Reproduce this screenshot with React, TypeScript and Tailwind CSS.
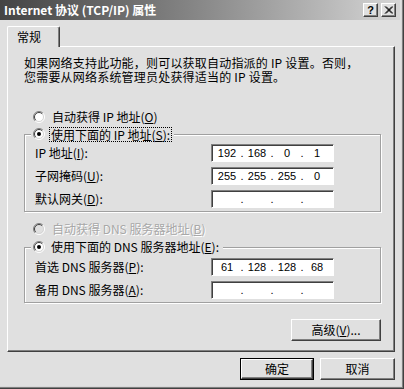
import React from "react";

const bg = "bg-[#e0e0e0]";

function Radio({ checked = false, disabled = false }: { checked?: boolean; disabled?: boolean }) {
  return (
    <svg width="12" height="12" viewBox="0 0 12 12" className="shrink-0">
      <circle cx="6" cy="6" r="5" fill={disabled ? "#e0e0e0" : "#ffffff"} />
      <path d="M9.9 2.1 A5.5 5.5 0 0 0 2.1 9.9" fill="none" stroke="#808080" strokeWidth="1" />
      <path d="M2.1 9.9 A5.5 5.5 0 0 0 9.9 2.1" fill="none" stroke="#ffffff" strokeWidth="1" />
      <path d="M9.2 2.8 A4.5 4.5 0 0 0 2.8 9.2" fill="none" stroke="#404040" strokeWidth="1" />
      <path d="M2.8 9.2 A4.5 4.5 0 0 0 9.2 2.8" fill="none" stroke="#d4d4d4" strokeWidth="1" />
      {checked && <circle cx="6" cy="6" r="2" fill={disabled ? "#808080" : "#000000"} />}
    </svg>
  );
}

function IpBox({ parts }: { parts?: string[] }) {
  const vals = parts ?? ["", "", "", ""];
  return (
    <div className="w-[123px] h-[18px] bg-white border-t border-l border-[#808080] border-r border-b border-r-white border-b-white shadow-[inset_1px_1px_0_#404040] flex items-center pl-[3px] font-['Liberation_Sans',sans-serif] text-[11px] text-black">
      {vals.map((v, i) => (
        <React.Fragment key={i}>
          <span className="w-[24px] text-center leading-[14px]">{v}</span>
          {i < 3 && <span className="w-[6px] text-center leading-[14px]">.</span>}
        </React.Fragment>
      ))}
    </div>
  );
}

function Row({ label, parts }: { label: React.ReactNode; parts?: string[] }) {
  return (
    <div className="flex items-center h-[18px]">
      <span className="w-[186px] pl-[10px] leading-[14px]">{label}</span>
      <IpBox parts={parts} />
    </div>
  );
}

function Btn({ children, def = false, w }: { children: React.ReactNode; def?: boolean; w: string }) {
  const inner = (
    <div className="h-full w-full border-t border-l border-white border-r border-b border-r-[#404040] border-b-[#404040] shadow-[inset_-1px_-1px_0_#808080] flex items-center justify-center leading-[14px]">
      {children}
    </div>
  );
  return def ? (
    <div className={`${w} h-[22px] border border-black`}>{inner}</div>
  ) : (
    <div className={`${w} h-[22px]`}>{inner}</div>
  );
}

export default function App() {
  return (
    <div className={`w-[404px] h-[389px] ${bg} border-r border-b border-[#404040] flex flex-col text-[12px] text-black font-['Noto_Sans_CJK_SC',sans-serif]`}>
      <div className="flex-1 flex flex-col border-r border-b border-[#808080] shadow-[inset_-1px_-1px_0_#d8d8d8]">
        {/* title bar */}
        <div className="h-[20px] mr-[2px] bg-gradient-to-r from-[#444444] via-[#888888] to-[#d6d6d6] flex items-center pl-[4px] pr-[4px]">
          <span className="flex-1 text-white font-bold text-[12px] leading-[16px] whitespace-nowrap">
            Internet 协议 (TCP/IP) 属性
          </span>
          <div className="flex gap-[3px]">
            <div className="w-[15px] h-[14px] bg-[#e0e0e0] border-t border-l border-white border-r border-b border-r-[#404040] border-b-[#404040] shadow-[inset_-1px_-1px_0_#808080] flex items-center justify-center font-['Liberation_Sans',sans-serif] font-bold text-[11px] leading-[11px]">
              ?
            </div>
            <div className="w-[15px] h-[14px] bg-[#e0e0e0] border-t border-l border-white border-r border-b border-r-[#404040] border-b-[#404040] shadow-[inset_-1px_-1px_0_#808080] flex items-center justify-center">
              <svg width="9" height="8" viewBox="0 0 9 8">
                <path d="M1 0.5 L8 7.5 M2 0.5 L9 7.5 M8 0.5 L1 7.5 M9 0.5 L2 7.5" stroke="#000" strokeWidth="1" />
              </svg>
            </div>
          </div>
        </div>

        {/* tab */}
        <div className="mt-[6px] ml-[7px] w-[53px] h-[21px] -mb-[1px] relative z-10 bg-[#e0e0e0] border-t border-l border-white border-r border-r-[#404040] shadow-[inset_-1px_0_0_#808080] rounded-t-[2px] pl-[9px] pt-[3px] leading-[14px]">
          常规
        </div>

        {/* panel */}
        <div className="ml-[7px] w-[388px] h-[306px] border-t border-l border-white border-r border-b border-r-[#404040] border-b-[#404040] shadow-[inset_-1px_-1px_0_#808080] pl-[16px] pt-[9px]">
          <div className="w-[357px] flex flex-col">
            <div className="leading-[14px] tracking-[0.2px]">
              如果网络支持此功能，则可以获取自动指派的 IP 设置。否则，
            </div>
            <div className="leading-[14px] tracking-[0.2px]">
              您需要从网络系统管理员处获得适当的 IP 设置。
            </div>

            <div className="mt-[26px] pl-[9px] h-[14px] flex items-center gap-[7px]">
              <Radio />
              <span className="leading-[14px]">
                自动获得 IP 地址(<span className="underline">O</span>)
              </span>
            </div>

            <div className="mt-[10px] border border-[#a0a0a0] shadow-[1px_1px_0_#ffffff,inset_1px_1px_0_#ffffff] pb-[3px] flex flex-col">
              <div className={`-mt-[8px] ml-[6px] pl-[2px] pr-[3px] w-fit h-[14px] ${bg} flex items-center gap-[5px]`}>
                <Radio checked />
                <span className="leading-[13px] outline-1 outline-dotted outline-black px-[1px]">
                  使用下面的 IP 地址(<span className="underline">S</span>):
                </span>
              </div>
              <div className="mt-[3px] flex flex-col gap-[5px]">
                <Row label={<>IP 地址(<span className="underline">I</span>):</>} parts={["192", "168", "0", "1"]} />
                <Row label={<>子网掩码(<span className="underline">U</span>):</>} parts={["255", "255", "255", "0"]} />
                <Row label={<>默认网关(<span className="underline">D</span>):</>} />
              </div>
            </div>

            <div className="mt-[10px] pl-[9px] h-[14px] flex items-center gap-[7px]">
              <Radio disabled />
              <span className="leading-[14px] text-[#a8a8a8] [text-shadow:1px_1px_0_#ffffff]">
                自动获得 DNS 服务器地址(<span className="underline">B</span>)
              </span>
            </div>

            <div className="mt-[11px] border border-[#a0a0a0] shadow-[1px_1px_0_#ffffff,inset_1px_1px_0_#ffffff] pb-[3px] flex flex-col">
              <div className={`-mt-[8px] ml-[6px] pl-[2px] pr-[4px] w-fit h-[14px] ${bg} flex items-center gap-[6px]`}>
                <Radio checked />
                <span className="leading-[14px]">
                  使用下面的 DNS 服务器地址(<span className="underline">E</span>):
                </span>
              </div>
              <div className="mt-[4px] flex flex-col gap-[5px]">
                <Row label={<>首选 DNS 服务器(<span className="underline">P</span>):</>} parts={["61", "128", "128", "68"]} />
                <Row label={<>备用 DNS 服务器(<span className="underline">A</span>):</>} />
              </div>
            </div>

            <div className="mt-[16px] flex justify-end">
              <Btn w="w-[90px]">
                高级(<span className="underline">V</span>)...
              </Btn>
            </div>
          </div>
        </div>

        {/* dialog buttons */}
        <div className="mt-[6px] pr-[7px] flex justify-end gap-[6px]">
          <Btn def w="w-[74px]">确定</Btn>
          <Btn w="w-[75px]">取消</Btn>
        </div>
      </div>
    </div>
  );
}
